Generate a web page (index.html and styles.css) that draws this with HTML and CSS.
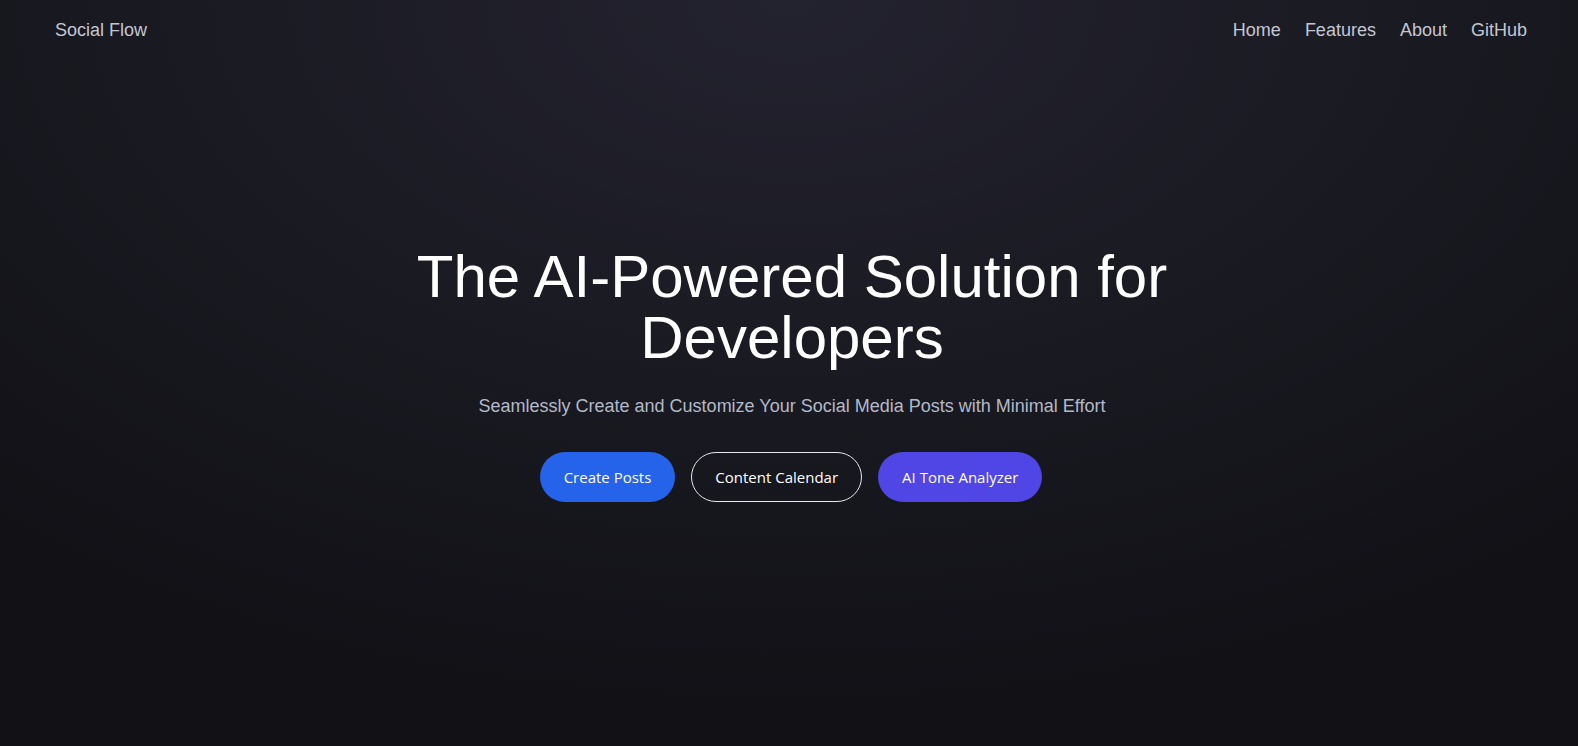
FILE: index.html
```html
<!DOCTYPE html>
<html lang="en">
<head>
<meta charset="utf-8">
<title>Social Flow</title>
<link rel="stylesheet" href="styles.css">
</head>
<body>
<div class="page">
  <header class="topbar">
    <a class="brand" href="#">Social Flow</a>
    <nav class="nav">
      <a href="#">Home</a>
      <a href="#">Features</a>
      <a href="#">About</a>
      <a href="#">GitHub</a>
    </nav>
  </header>
  <main class="hero">
    <div class="hero-inner">
      <h1 class="title">The AI-Powered Solution for<br>Developers</h1>
      <p class="subtitle">Seamlessly Create and Customize Your Social Media Posts with Minimal Effort</p>
      <div class="actions">
        <a class="btn btn-blue" href="#">Create Posts</a>
        <a class="btn btn-outline" href="#">Content Calendar</a>
        <a class="btn btn-indigo" href="#">AI Tone Analyzer</a>
      </div>
    </div>
  </main>
</div>
</body>
</html>
```

FILE: styles.css
```css
* { box-sizing: border-box; }
html, body { margin: 0; padding: 0; }
body {
  font-family: "Liberation Sans", Arial, sans-serif;
  color: #fff;
  background: #121217;
}
a { text-decoration: none; color: inherit; }

.page {
  display: grid;
  min-height: 100vh;
  background: radial-gradient(ellipse 75% 95% at 50% 0%, #23222f 0%, #1b1b24 45%, #111116 100%);
}

.topbar {
  grid-area: 1 / 1;
  align-self: start;
  display: flex;
  justify-content: space-between;
  align-items: center;
  padding: 16px 51px 0 55px;
  font-size: 18px;
  line-height: 28px;
  color: #c3c7d2;
  z-index: 1;
}
.nav { display: flex; gap: 24px; }

.hero {
  grid-area: 1 / 1;
  display: flex;
  align-items: center;
  justify-content: center;
  text-align: center;
  padding: 2px 0 0 6px;
}
.hero-inner { display: flex; flex-direction: column; align-items: center; }

.title {
  margin: 0 0 24px;
  font-size: 60px;
  line-height: 61px;
  font-weight: 400;
  color: #fff;
}
.subtitle {
  margin: 0 0 32px;
  font-size: 18px;
  line-height: 28px;
  color: #b3b9c8;
}
.actions { display: flex; gap: 16px; margin-left: -2px; }
.btn {
  font-family: "Open Sans", "Noto Sans", sans-serif;
  font-size: 15px;
  line-height: 24px;
  padding: 12px 23px;
  border-radius: 9999px;
  border: 1px solid transparent;
  color: #fff;
}
.btn-blue { background: #2563eb; }
.btn-indigo { background: #4f46e5; }
.btn-outline { border-color: #e8e8ee; background: transparent; }
```
